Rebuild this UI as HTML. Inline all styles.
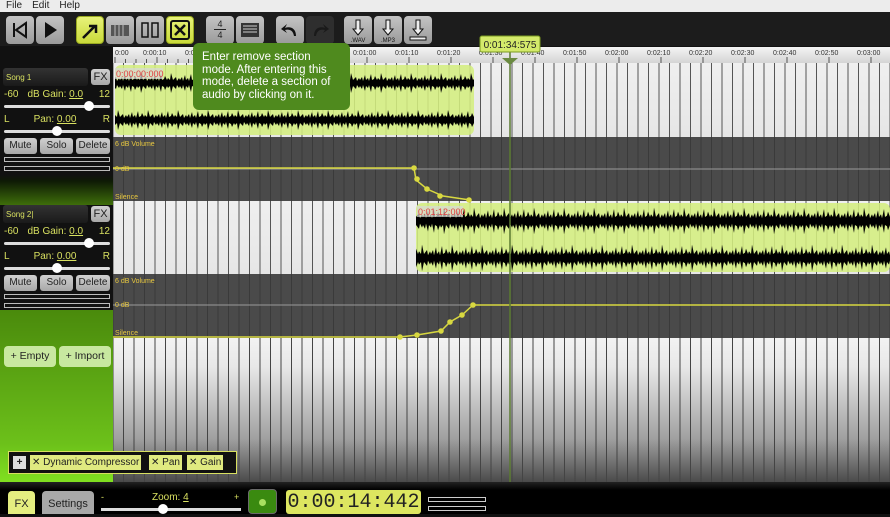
<!DOCTYPE html>
<html><head><meta charset="utf-8"><style>
*{margin:0;padding:0;box-sizing:border-box}
body{width:890px;height:514px;overflow:hidden;background:#111;font-family:"Liberation Sans",sans-serif;position:relative}
.a{position:absolute}
.menu{left:0;top:0;width:890px;height:12px;background:#ececec;font-size:10px;color:#222;line-height:11px}
.menu span{margin-left:6px;margin-right:4px}
.tb{left:0;top:12px;width:890px;height:34px;background:#1c1c1c}
.btn{position:absolute;top:16px;width:28px;height:28px;border-radius:4px;background:linear-gradient(#c4c4c4,#9a9a9a)}
.btn.y{background:linear-gradient(#e8f27a,#c9da3a);border:1px solid #9aaa20}
.ruler{left:113px;top:47px;width:777px;height:16px;background:linear-gradient(#f4f4f4,#d4d4d4);font-size:7px;color:#333}
.lbl{color:#d8e060;font-size:10px}
.sm{position:absolute;height:16px;border-radius:3px;background:linear-gradient(#d0d0d0,#a8a8a8);font-size:10px;color:#222;text-align:center;line-height:16px}
.meter{position:absolute;left:4px;width:106px;height:5px;border:1px solid #bbb}
.slider{position:absolute;left:4px;width:106px;height:3px;background:#ddd;border-radius:2px}
.knob{position:absolute;width:10px;height:10px;border-radius:5px;background:#fff;top:-4px}
.grid{background:repeating-linear-gradient(90deg,#555 0 1px,transparent 1px 10.5px),linear-gradient(#efefef,#e6e6e6);background-position:115px 0}
.vol{background:repeating-linear-gradient(90deg,#3a3a3a 0 1px,transparent 1px 10.5px),#4a4a4a;background-position:115px 0}
</style></head><body>
<div class="a menu"><span>File</span><span>Edit</span><span>Help</span></div>
<div class="a tb"></div>
<div class="btn" style="left:6px"><svg width="28" height="28"><path d="M8 7v14M20 7L10 14L20 21Z" stroke="#111" stroke-width="2" fill="none"/></svg></div>
<div class="btn" style="left:36px"><svg width="28" height="28"><path d="M9 6L21 14L9 22Z" fill="#111"/></svg></div>
<div class="btn y" style="left:76px"><svg width="26" height="26"><path d="M6 21L18 9M12 9h7v7" stroke="#111" stroke-width="2.5" fill="none"/></svg></div>
<div class="btn" style="left:106px"><svg width="28" height="28"><rect x="5" y="9" width="18" height="11" fill="#555"/><path d="M9 9v11M13 9v11M17 9v11" stroke="#bbb"/></svg></div>
<div class="btn" style="left:136px"><svg width="28" height="28"><rect x="6" y="7" width="6" height="14" stroke="#111" stroke-width="1.5" fill="none"/><rect x="16" y="7" width="6" height="14" stroke="#111" stroke-width="1.5" fill="none"/></svg></div>
<div class="btn y" style="left:166px"><svg width="26" height="26"><rect x="4" y="4" width="18" height="18" rx="2" stroke="#111" stroke-width="2" fill="none"/><path d="M8 8l10 10M18 8L8 18" stroke="#111" stroke-width="2.5"/></svg></div>
<div class="btn" style="left:206px;font-size:9px;text-align:center;line-height:10px;padding-top:3px;color:#222">4<br><span style="display:block;width:12px;margin:0 auto;border-top:1px solid #222"></span>4</div>
<div class="btn" style="left:236px"><svg width="28" height="28"><rect x="5" y="7" width="18" height="14" fill="#333"/><path d="M7 10h14M7 13h14M7 16h14" stroke="#ccc" stroke-width="1"/></svg></div>
<div class="btn" style="left:276px"><svg width="28" height="28"><path d="M20 20C20 12 14 10 9 12L11 8L5 13L11 17L9 14C13 13 17 14 18 20Z" fill="#111"/></svg></div>
<div class="btn" style="left:306px;background:#2e2e2e"><svg width="28" height="28"><path d="M8 20C8 12 14 10 19 12L17 8L23 13L17 17L19 14C15 13 11 14 10 20Z" fill="#1a1a1a"/></svg></div>
<div class="btn" style="left:344px"><svg width="28" height="28"><path d="M12 4h4v9h3l-5 6l-5-6h3Z" stroke="#111" fill="#eee"/><text x="14" y="26" font-size="6" text-anchor="middle" fill="#111">.WAV</text></svg></div>
<div class="btn" style="left:374px"><svg width="28" height="28"><path d="M12 4h4v9h3l-5 6l-5-6h3Z" stroke="#111" fill="#eee"/><text x="14" y="26" font-size="6" text-anchor="middle" fill="#111">.MP3</text></svg></div>
<div class="btn" style="left:404px"><svg width="28" height="28"><path d="M12 4h4v9h3l-5 6l-5-6h3Z" stroke="#111" fill="#eee"/><rect x="6" y="21" width="16" height="3" stroke="#111" fill="#eee"/></svg></div>

<div class="a ruler">
<svg width="777" height="16" class="a" style="left:0;top:0">
<g stroke="#555">
<path d="M2 10v6M12.5 12v4M23 12v4M33.5 12v4M44 10v6M54.5 12v4M65 12v4M75.5 12v4M86 10v6M96.5 12v4M107 12v4M117.5 12v4M128 10v6M170 10v6M212 10v6M254 10v6M296 10v6M338 10v6M380 10v6M422 10v6M464 10v6M506 10v6M548 10v6M590 10v6M632 10v6M674 10v6M716 10v6M758 10v6"/>
</g>
<g font-size="7" fill="#333" font-family="Liberation Sans">
<text x="2" y="8">0:00</text><text x="30" y="8">0:00:10</text><text x="72" y="8">0:00:20</text><text x="114" y="8">0:00:30</text><text x="156" y="8">0:00:40</text><text x="198" y="8">0:00:50</text><text x="240" y="8">0:01:00</text><text x="282" y="8">0:01:10</text><text x="324" y="8">0:01:20</text><text x="366" y="8">0:01:30</text><text x="408" y="8">0:01:40</text><text x="450" y="8">0:01:50</text><text x="492" y="8">0:02:00</text><text x="534" y="8">0:02:10</text><text x="576" y="8">0:02:20</text><text x="618" y="8">0:02:30</text><text x="660" y="8">0:02:40</text><text x="702" y="8">0:02:50</text><text x="744" y="8">0:03:00</text>
</g></svg></div>

<div class="a grid" style="left:113px;top:63px;width:777px;height:74px"></div>
<div class="a vol" style="left:113px;top:137px;width:777px;height:64px"></div>
<div class="a grid" style="left:113px;top:201px;width:777px;height:73px"></div>
<div class="a vol" style="left:113px;top:274px;width:777px;height:64px"></div>
<div class="a" style="left:113px;top:338px;width:777px;height:144px;background:repeating-linear-gradient(90deg,#444 0 1px,transparent 1px 10.5px),linear-gradient(#f2f2f2 0%,#e8e8e8 20%,#a0a0a0 70%,#4a4a4a 100%);background-position:115px 0"></div>

<svg class="a" style="left:0;top:0" width="890" height="514">
<defs>
<g id="tile"><polygon fill="#000" points="0,12 2,9 3,13 5,7 6,12 8,10 9,13 11,6 12,12 14,11 15,8 17,12 18,10 20,12 21,5 23,12 24,11 26,9 27,13 29,10 30,12 30,18 29,20 27,17 26,21 24,19 23,18 21,25 20,18 18,20 17,18 15,22 14,19 12,18 11,24 9,17 8,20 6,18 5,23 3,17 2,21 0,18"/></g>
<pattern id="w1a" x="0" y="68" width="30" height="30" patternUnits="userSpaceOnUse"><use href="#tile"/></pattern>
<pattern id="w1b" x="7" y="105" width="30" height="30" patternUnits="userSpaceOnUse"><use href="#tile"/></pattern>
<pattern id="w2a" x="3" y="201" width="30" height="40" patternUnits="userSpaceOnUse"><use href="#tile" transform="scale(1,1.33)"/></pattern>
<pattern id="w2b" x="11" y="238" width="30" height="40" patternUnits="userSpaceOnUse"><use href="#tile" transform="scale(1,1.33)"/></pattern>
<clipPath id="c1"><rect x="115" y="65" width="359" height="70" rx="6"/></clipPath>
<clipPath id="c2"><rect x="416" y="203" width="474" height="69" rx="6"/></clipPath>
</defs>
<rect x="115" y="65" width="359" height="70" rx="6" fill="#d4ee80" opacity=".88"/>
<g clip-path="url(#c1)">
<rect x="115" y="68" width="359" height="30" fill="url(#w1a)"/>
<rect x="115" y="105" width="359" height="30" fill="url(#w1b)"/>
</g>
<rect x="416" y="203" width="474" height="69" rx="6" fill="#d4ee80" opacity=".88"/>
<g clip-path="url(#c2)">
<rect x="416" y="201" width="474" height="40" fill="url(#w2a)"/>
<rect x="416" y="238" width="474" height="40" fill="url(#w2b)"/>
</g>
<rect x="115" y="68" width="48" height="11" fill="#d8d8d8" opacity=".7"/>
<text x="116" y="77" font-size="9" fill="#e04040" font-family="Liberation Sans">0:00:00:000</text>
<rect x="417" y="206" width="46" height="11" fill="#d8d8d8" opacity=".7"/>
<text x="418" y="215" font-size="9" fill="#e04040" font-family="Liberation Sans">0:01:12:000</text>
<line x1="113" y1="169" x2="890" y2="169" stroke="#999"/>
<polyline points="113,168 414,168 416,180 427,189 443,196 470,200" stroke="#d8d840" stroke-width="1.5" fill="none"/>
<g fill="#d8d840"><circle cx="414" cy="168" r="2.8"/><circle cx="417" cy="179" r="2.8"/><circle cx="427" cy="189" r="2.8"/><circle cx="440" cy="196" r="2.8"/><circle cx="469" cy="200" r="2.8"/></g>
<line x1="113" y1="305" x2="890" y2="305" stroke="#999"/>
<polyline points="113,337 400,337 417,335 441,331 450,322 462,315 473,305 890,305" stroke="#d8d840" stroke-width="1.5" fill="none"/>
<g fill="#d8d840"><circle cx="400" cy="337" r="2.8"/><circle cx="417" cy="335" r="2.8"/><circle cx="441" cy="331" r="2.8"/><circle cx="450" cy="322" r="2.8"/><circle cx="462" cy="315" r="2.8"/><circle cx="473" cy="305" r="2.8"/></g>
<g font-size="7" fill="#e8c840" font-family="Liberation Sans">
<text x="115" y="146">6 dB Volume</text><text x="115" y="171">0 dB</text><text x="115" y="199">Silence</text>
<text x="115" y="283">6 dB Volume</text><text x="115" y="307">0 dB</text><text x="115" y="335">Silence</text></g>
<line x1="510" y1="52" x2="510" y2="482" stroke="#5a7a30" stroke-width="1.5"/>
<path d="M502 58h16l-8 7Z" fill="#6a8a40"/>
<rect x="480" y="36" width="60" height="16" rx="2" fill="#d4ea6b" stroke="#7a9a20"/>
<text x="510" y="48" font-size="10" fill="#222" text-anchor="middle" font-family="Liberation Sans">0:01:34:575</text>
</svg>

<div class="a" style="left:193px;top:43px;width:157px;height:67px;background:#4f8a1e;border-radius:6px;color:#fff;font-size:11.5px;line-height:12.6px;padding:8px 9px;white-space:nowrap">Enter remove section<br>mode. After entering this<br>mode, delete a section of<br>audio by clicking on it.</div>

<div class="a" style="left:0;top:63px;width:113px;height:419px;background:linear-gradient(#111 0,#111 112px,#0e1a05 118px,#3e6e0a 142px,#111 142px,#111 247px,#4a8a0c 247px,#6cc01a 380px,#80e020 419px)"></div>
<div class="a" style="left:0;top:63px;width:113px">
 <div class="a" style="left:3px;top:5px;width:85px;height:18px;background:linear-gradient(#333,#1a1a1a);border-radius:3px;font-size:8px;color:#d8e060;padding:5px 3px">Song 1</div>
 <div class="sm" style="left:91px;top:6px;width:19px;height:16px;font-size:11px">FX</div>
 <div class="a lbl" style="left:4px;top:26px;width:106px"><span>-60</span><span style="margin-left:9px">dB Gain: <u>0.0</u></span><span style="float:right">12</span></div>
 <div class="slider" style="top:42px"><div class="knob" style="left:80px"></div></div>
 <div class="a lbl" style="left:4px;top:51px;width:106px"><span>L</span><span style="margin-left:24px">Pan: <u>0.00</u></span><span style="float:right">R</span></div>
 <div class="slider" style="top:67px"><div class="knob" style="left:48px"></div></div>
 <div class="sm" style="left:4px;top:75px;width:33px">Mute</div><div class="sm" style="left:40px;top:75px;width:33px">Solo</div><div class="sm" style="left:76px;top:75px;width:34px">Delete</div>
 <div class="meter" style="top:94px"></div><div class="meter" style="top:103px"></div>
</div>
<div class="a" style="left:0;top:200px;width:113px">
 <div class="a" style="left:3px;top:5px;width:85px;height:18px;background:linear-gradient(#333,#1a1a1a);border-radius:3px;font-size:8px;color:#d8e060;padding:5px 3px">Song 2|</div>
 <div class="sm" style="left:91px;top:6px;width:19px;height:16px;font-size:11px">FX</div>
 <div class="a lbl" style="left:4px;top:26px;width:106px"><span>-60</span><span style="margin-left:9px">dB Gain: <u>0.0</u></span><span style="float:right">12</span></div>
 <div class="slider" style="top:42px"><div class="knob" style="left:80px"></div></div>
 <div class="a lbl" style="left:4px;top:51px;width:106px"><span>L</span><span style="margin-left:24px">Pan: <u>0.00</u></span><span style="float:right">R</span></div>
 <div class="slider" style="top:67px"><div class="knob" style="left:48px"></div></div>
 <div class="sm" style="left:4px;top:75px;width:33px">Mute</div><div class="sm" style="left:40px;top:75px;width:33px">Solo</div><div class="sm" style="left:76px;top:75px;width:34px">Delete</div>
 <div class="meter" style="top:94px"></div><div class="meter" style="top:103px"></div>
</div>
<div class="a" style="left:4px;top:346px;width:52px;height:21px;background:#c8e8a0;border-radius:4px;font-size:10.5px;color:#222;text-align:center;line-height:21px">+ Empty</div>
<div class="a" style="left:59px;top:346px;width:52px;height:21px;background:#c8e8a0;border-radius:4px;font-size:10.5px;color:#222;text-align:center;line-height:21px">+ Import</div>
<div class="a" style="left:8px;top:451px;width:229px;height:23px;background:#111;border:1px solid #d8e060;font-size:10px;color:#222">
 <span class="a" style="left:4px;top:4px;width:13px;height:13px;background:#ddd;text-align:center;line-height:13px;font-weight:bold">+</span>
 <span class="a" style="left:21px;top:3px;height:15px;padding:0 2px;background:#e0ea80;line-height:15px">✕ Dynamic Compressor</span>
 <span class="a" style="left:140px;top:3px;height:15px;padding:0 2px;background:#e0ea80;line-height:15px">✕ Pan</span>
 <span class="a" style="left:178px;top:3px;height:15px;padding:0 2px;background:#e0ea80;line-height:15px">✕ Gain</span>
</div>

<div class="a" style="left:0;top:482px;width:890px;height:32px;background:linear-gradient(#222,#000 8px)"></div>
<div class="a" style="left:8px;top:491px;width:27px;height:23px;background:#e4ee80;border-radius:4px 4px 0 0;font-size:11px;text-align:center;line-height:26px;color:#222">FX</div>
<div class="a" style="left:42px;top:491px;width:52px;height:23px;background:#a8a8a8;border-radius:4px 4px 0 0;font-size:11px;text-align:center;line-height:26px;color:#222">Settings</div>
<div class="a" style="left:101px;top:492px;font-size:9px;color:#d8e060">-</div>
<div class="a" style="left:152px;top:492px;font-size:10px;color:#d8e060">Zoom: <u>4</u></div>
<div class="a" style="left:234px;top:492px;font-size:9px;color:#d8e060">+</div>
<div class="a" style="left:101px;top:508px;width:140px;height:3px;background:#ddd"></div>
<div class="a" style="left:158px;top:504px;width:10px;height:10px;border-radius:5px;background:#fff"></div>
<div class="a" style="left:248px;top:489px;width:29px;height:25px;background:#3a8a10;border:1px solid #6a6a6a;border-radius:4px"><div class="a" style="left:10px;top:9px;width:7px;height:7px;border-radius:4px;background:#a8e060"></div></div>
<div class="a" style="left:286px;top:490px;width:135px;height:24px;background:#dde660;border-radius:3px;font-family:'Liberation Mono',monospace;font-size:20px;color:#222;text-align:center;line-height:26px">0:00:14:442</div>
<div class="a" style="left:428px;top:497px;width:58px;height:5px;border:1px solid #ccc"></div>
<div class="a" style="left:428px;top:506px;width:58px;height:5px;border:1px solid #ccc"></div>
</body></html>
